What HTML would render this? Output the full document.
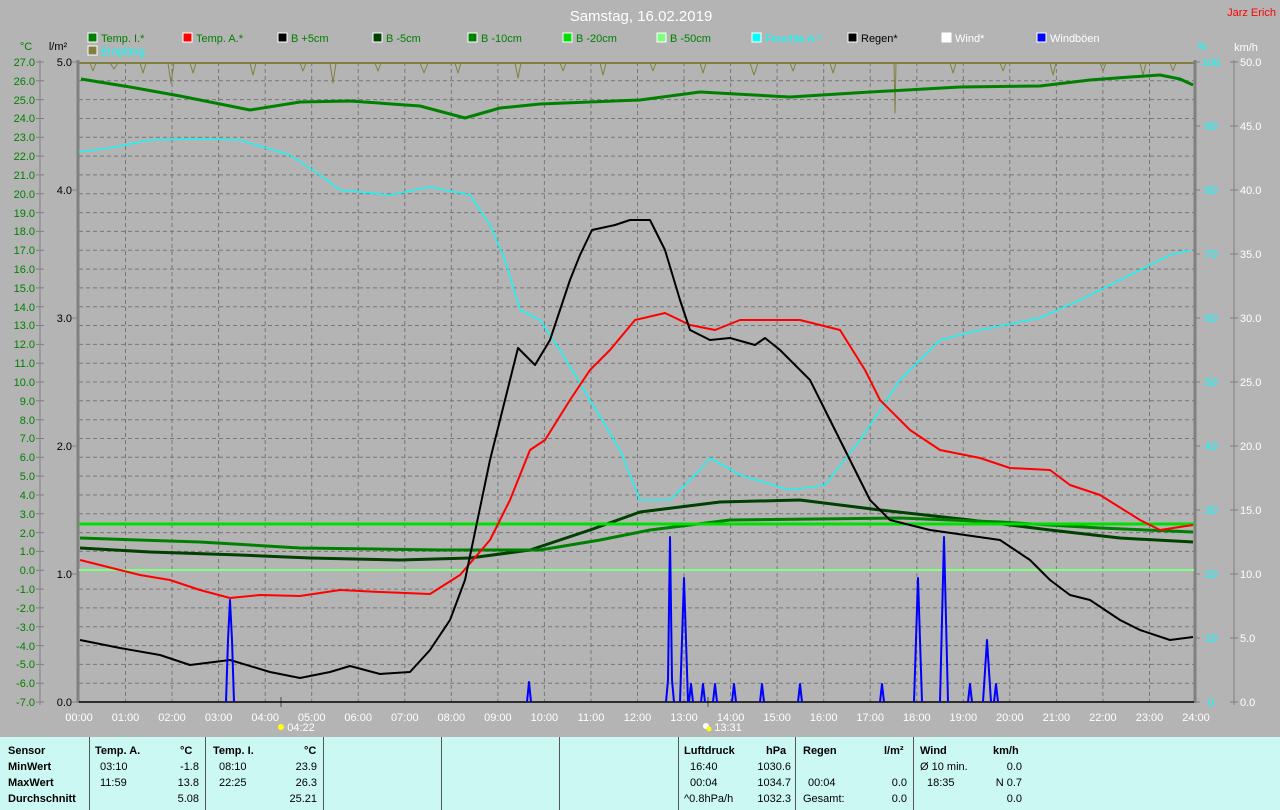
<!DOCTYPE html>
<html><head><meta charset="utf-8"><style>
body{margin:0;width:1280px;height:810px;overflow:hidden;background:#b4b4b4;font-family:"Liberation Sans",sans-serif}
svg{position:absolute;left:0;top:0}
.p{position:absolute;left:0;top:737px;width:1280px;height:73px;background:#ccf8f4;font-size:11px;color:#000}
.v{position:absolute;top:0;width:1px;height:73px;background:#555}
.t{position:absolute;white-space:nowrap}
.b{font-weight:bold}
</style></head><body>
<svg width="1280" height="737" font-family="Liberation Sans, sans-serif">
<text x="641" y="21" fill="#fff" font-size="15" text-anchor="middle">Samstag, 16.02.2019</text>
<text x="1276" y="16" fill="#f00" font-size="11" text-anchor="end">Jarz Erich</text>
<g font-size="11">
<rect x="88" y="33" width="9" height="9" fill="#008000" stroke="#fff"/><text x="101" y="42" fill="#008000">Temp. I.*</text>
<rect x="183" y="33" width="9" height="9" fill="#f00" stroke="#fff"/><text x="196" y="42" fill="#008000">Temp. A.*</text>
<rect x="278" y="33" width="9" height="9" fill="#000" stroke="#fff"/><text x="291" y="42" fill="#008000">B +5cm</text>
<rect x="373" y="33" width="9" height="9" fill="#004000" stroke="#fff"/><text x="386" y="42" fill="#008000">B -5cm</text>
<rect x="468" y="33" width="9" height="9" fill="#008000" stroke="#fff"/><text x="481" y="42" fill="#008000">B -10cm</text>
<rect x="563" y="33" width="9" height="9" fill="#00e000" stroke="#fff"/><text x="576" y="42" fill="#008000">B -20cm</text>
<rect x="657" y="33" width="9" height="9" fill="#80ff80" stroke="#fff"/><text x="670" y="42" fill="#008000">B -50cm</text>
<rect x="752" y="33" width="9" height="9" fill="#0ff" stroke="#fff"/><text x="765" y="42" fill="#0ff">Feuchte A.*</text>
<rect x="848" y="33" width="9" height="9" fill="#000" stroke="#fff"/><text x="861" y="42" fill="#000">Regen*</text>
<rect x="942" y="33" width="9" height="9" fill="#fff" stroke="#fff"/><text x="955" y="42" fill="#fff">Wind*</text>
<rect x="1037" y="33" width="9" height="9" fill="#00f" stroke="#fff"/><text x="1050" y="42" fill="#fff">Windböen</text>
<rect x="88" y="46" width="9" height="9" fill="#808040" stroke="#fff"/><text x="101" y="55" fill="#0ff">Empfang</text>
<text x="26" y="50" fill="#008000" text-anchor="middle">°C</text>
<text x="58" y="50" fill="#000" text-anchor="middle">l/m²</text>
<text x="1202" y="50" fill="#0ff" text-anchor="middle">%</text>
<text x="1246" y="51" fill="#fff" text-anchor="middle">km/h</text>
</g>
<!-- grid -->
<g stroke="#777" stroke-dasharray="4,3" stroke-width="1">
<path id="hg" d="M79 80.8H1194M79 99.6H1194M79 118.5H1194M79 137.3H1194M79 156.1H1194M79 174.9H1194M79 193.8H1194M79 212.6H1194M79 231.4H1194M79 250.2H1194M79 269.1H1194M79 287.9H1194M79 306.7H1194M79 325.5H1194M79 344.4H1194M79 363.2H1194M79 382H1194M79 400.8H1194M79 419.7H1194M79 438.5H1194M79 457.3H1194M79 476.1H1194M79 495H1194M79 513.8H1194M79 532.6H1194M79 551.4H1194M79 570.3H1194M79 589.1H1194M79 607.9H1194M79 626.7H1194M79 645.6H1194M79 664.4H1194M79 683.2H1194"/>
<path d="M125.5 62V702M172 62V702M218.6 62V702M265.2 62V702M311.7 62V702M358.2 62V702M404.8 62V702M451.3 62V702M497.9 62V702M544.4 62V702M591 62V702M637.5 62V702M684 62V702M730.6 62V702M777.1 62V702M823.7 62V702M870.2 62V702M916.8 62V702M963.3 62V702M1009.8 62V702M1056.4 62V702M1102.9 62V702M1149.5 62V702"/>
</g>
<g stroke="#808080" fill="none">
<path d="M78 60V703M1195 60V703" stroke-width="3"/>
<path d="M40 60V705M1234 60V705"/>
<path d="M1194 62h6M1194 126h6M1194 190h6M1194 254h6M1194 318h6M1194 382h6M1194 446h6M1194 510h6M1194 574h6M1194 638h6M1194 702h6"/>
<path d="M1230 62h8M1230 126h8M1230 190h8M1230 254h8M1230 318h8M1230 382h8M1230 446h8M1230 510h8M1230 574h8M1230 638h8M1230 702h8"/>
<path d="M72 62h6M72 190h6M72 318h6M72 446h6M72 574h6M72 702h6"/>
<path d="M281 697v10M708 697v10" stroke-width="2"/>
</g>
<path d="M79 702H1194" stroke="#000" stroke-width="1.5"/>
<path d="M36 62h8M36 80.8h8M36 99.6h8M36 118.5h8M36 137.3h8M36 156.1h8M36 174.9h8M36 193.8h8M36 212.6h8M36 231.4h8M36 250.2h8M36 269.1h8M36 287.9h8M36 306.7h8M36 325.5h8M36 344.4h8M36 363.2h8M36 382h8M36 400.8h8M36 419.7h8M36 438.5h8M36 457.3h8M36 476.1h8M36 495h8M36 513.8h8M36 532.6h8M36 551.4h8M36 570.3h8M36 589.1h8M36 607.9h8M36 626.7h8M36 645.6h8M36 664.4h8M36 683.2h8M36 702h8" stroke="#808080"/>
<g font-size="11" fill="#008000" text-anchor="end">
<text x="35" y="66">27.0</text><text x="35" y="85">26.0</text><text x="35" y="104">25.0</text><text x="35" y="122">24.0</text><text x="35" y="141">23.0</text><text x="35" y="160">22.0</text><text x="35" y="179">21.0</text><text x="35" y="198">20.0</text><text x="35" y="217">19.0</text><text x="35" y="235">18.0</text><text x="35" y="254">17.0</text><text x="35" y="273">16.0</text><text x="35" y="292">15.0</text><text x="35" y="311">14.0</text><text x="35" y="329">13.0</text><text x="35" y="348">12.0</text><text x="35" y="367">11.0</text><text x="35" y="386">10.0</text><text x="35" y="405">9.0</text><text x="35" y="424">8.0</text><text x="35" y="442">7.0</text><text x="35" y="461">6.0</text><text x="35" y="480">5.0</text><text x="35" y="499">4.0</text><text x="35" y="518">3.0</text><text x="35" y="537">2.0</text><text x="35" y="555">1.0</text><text x="35" y="574">0.0</text><text x="35" y="593">-1.0</text><text x="35" y="612">-2.0</text><text x="35" y="631">-3.0</text><text x="35" y="650">-4.0</text><text x="35" y="668">-5.0</text><text x="35" y="687">-6.0</text><text x="35" y="706">-7.0</text>
</g>
<g font-size="11" fill="#000" text-anchor="end">
<text x="72" y="66">5.0</text><text x="72" y="194">4.0</text><text x="72" y="322">3.0</text><text x="72" y="450">2.0</text><text x="72" y="578">1.0</text><text x="72" y="706">0.0</text>
</g>
<g font-size="11" fill="#0ff">
<text x="1202" y="66">100</text><text x="1205" y="130">90</text><text x="1205" y="194">80</text><text x="1205" y="258">70</text><text x="1205" y="322">60</text><text x="1205" y="386">50</text><text x="1205" y="450">40</text><text x="1205" y="514">30</text><text x="1205" y="578">20</text><text x="1205" y="642">10</text><text x="1208" y="706">0</text>
</g>
<g font-size="11" fill="#fff">
<text x="1240" y="66">50.0</text><text x="1240" y="130">45.0</text><text x="1240" y="194">40.0</text><text x="1240" y="258">35.0</text><text x="1240" y="322">30.0</text><text x="1240" y="386">25.0</text><text x="1240" y="450">20.0</text><text x="1240" y="514">15.0</text><text x="1240" y="578">10.0</text><text x="1240" y="642">5.0</text><text x="1240" y="706">0.0</text>
</g>
<g font-size="11" fill="#fff" text-anchor="middle">
<text x="79" y="721">00:00</text><text x="125.5" y="721">01:00</text><text x="172" y="721">02:00</text><text x="218.6" y="721">03:00</text><text x="265.2" y="721">04:00</text><text x="311.7" y="721">05:00</text><text x="358.2" y="721">06:00</text><text x="404.8" y="721">07:00</text><text x="451.3" y="721">08:00</text><text x="497.9" y="721">09:00</text><text x="544.4" y="721">10:00</text><text x="591" y="721">11:00</text><text x="637.5" y="721">12:00</text><text x="684" y="721">13:00</text><text x="730.6" y="721">14:00</text><text x="777.1" y="721">15:00</text><text x="823.7" y="721">16:00</text><text x="870.2" y="721">17:00</text><text x="916.8" y="721">18:00</text><text x="963.3" y="721">19:00</text><text x="1009.8" y="721">20:00</text><text x="1056.4" y="721">21:00</text><text x="1102.9" y="721">22:00</text><text x="1149.5" y="721">23:00</text><text x="1196" y="721">24:00</text>
<text x="301" y="731">04:22</text><text x="728" y="731">13:31</text>
</g>
<circle cx="281" cy="727" r="3" fill="#ff0"/><circle cx="706" cy="726" r="3" fill="#fff"/><circle cx="709" cy="729" r="2.5" fill="#ff0"/>
<!-- data -->
<g fill="none" stroke-linejoin="round">
<path d="M79 63H1194" stroke="#808040" stroke-width="2"/>
<path d="M90 63l3 8 3-8M110 63l4 6 4-6M140 63l3 10 3-10M168 63l3 20 3-20M190 63l3 10 3-10M250 63l3 12 3-12M300 63l3 8 3-8M330 63l3 20 3-20M375 63l3 8 3-8M420 63l4 10 4-10M455 63l3 10 3-10M515 63l3 15 3-15M560 63l3 8 3-8M600 63l3 12 3-12M650 63l3 8 3-8M700 63l3 10 3-10M750 63l4 12 4-12M790 63l3 8 3-8M830 63l3 10 3-10M894 63l1 50 1-50M950 63l3 10 3-10M1000 63l3 8 3-8M1050 63l3 12 3-12M1100 63l3 8 3-8M1140 63l3 12 3-12M1170 63l3 8 3-8" stroke="#808040" stroke-width="1"/>
<path d="M81 79L130 87L180 96L250 110L300 102L350 101L420 106L465 118L500 108L540 104L640 100L700 92L790 97L870 92L960 87L1040 86L1090 80L1130 77L1160 75L1180 79L1193 85" stroke="#008000" stroke-width="3"/>
<path d="M79 152L110 148L150 140L200 139L240 140L290 155L320 175L340 190L390 195L430 187L470 195L490 225L505 260L520 310L540 320L560 350L590 400L620 450L640 500L670 500L700 470L710 458L740 475L790 490L825 485L860 440L900 380L940 340L980 330L1040 318L1080 300L1120 280L1170 255L1190 250" stroke="#0ff" stroke-width="1.3"/>
<path d="M80 548L150 552L240 555L310 558L400 560L470 558L530 550L590 530L640 512L720 502L800 500L880 510L970 520L1050 530L1120 538L1193 542" stroke="#004000" stroke-width="3"/>
<path d="M80 538L200 542L300 548L440 550L540 550L600 540L650 530L730 520L900 518L1000 522L1100 528L1193 532" stroke="#008000" stroke-width="3"/>
<path d="M79 524H1194" stroke="#00e000" stroke-width="3"/>
<path d="M79 570H1194" stroke="#80ff80" stroke-width="2"/>
<path d="M80 560L120 570L140 575L170 580L200 590L230 598L260 595L300 596L340 590L380 592L430 594L460 575L490 540L510 500L530 450L545 440L570 400L590 370L610 350L635 320L665 313L690 325L715 330L740 320L800 320L840 330L865 370L880 400L910 430L940 450L980 458L1010 468L1050 470L1070 485L1100 495L1140 520L1160 530L1193 525" stroke="#f00" stroke-width="2"/>
<path d="M80 640L120 648L160 655L190 665L230 660L270 672L300 678L330 672L350 666L380 674L410 672L430 650L450 620L465 580L490 460L505 400L518 348L535 365L550 340L570 280L580 255L592 230L615 225L630 220L650 220L665 250L680 300L690 330L710 340L730 338L755 345L765 338L780 350L810 380L830 420L850 460L870 500L890 520L930 530L1000 540L1030 560L1050 580L1070 595L1090 600L1120 620L1140 630L1170 640L1193 637" stroke="#000" stroke-width="2"/>
<path d="M226 702L228 640L230 600L232 640L234 702M527 702L529 682L531 702M666 702L668 680L670 537L672 680L674 702M680 702L684 578L688 702M689 702L691 684L693 702M701 702L703 684L705 702M713 702L715 684L717 702M732 702L734 684L736 702M760 702L762 684L764 702M798 702L800 684L802 702M880 702L882 684L884 702M914 702L918 578L922 702M940 702L944 537L948 702M968 702L970 684L972 702M983 702L987 640L991 702M994 702L996 684L998 702" stroke="#00f" stroke-width="2"/>
</g>
</svg>
<div class="p">
<div class="v" style="left:89px"></div><div class="v" style="left:205px"></div><div class="v" style="left:323px"></div><div class="v" style="left:441px"></div><div class="v" style="left:559px"></div><div class="v" style="left:678px"></div><div class="v" style="left:795px"></div><div class="v" style="left:913px"></div>
<div class="t b" style="left:8px;top:8px">Sensor</div><div class="t b" style="left:8px;top:24px">MinWert</div><div class="t b" style="left:8px;top:40px">MaxWert</div><div class="t b" style="left:8px;top:56px">Durchschnitt</div>
<div class="t b" style="left:95px;top:8px">Temp. A.</div><div class="t b" style="left:180px;top:8px">°C</div>
<div class="t" style="left:100px;top:24px">03:10</div><div class="t" style="left:100px;top:40px">11:59</div>
<div class="t" style="right:1081px;top:24px">-1.8</div><div class="t" style="right:1081px;top:40px">13.8</div><div class="t" style="right:1081px;top:56px">5.08</div>
<div class="t b" style="left:213px;top:8px">Temp. I.</div><div class="t b" style="left:304px;top:8px">°C</div>
<div class="t" style="left:219px;top:24px">08:10</div><div class="t" style="left:219px;top:40px">22:25</div>
<div class="t" style="right:963px;top:24px">23.9</div><div class="t" style="right:963px;top:40px">26.3</div><div class="t" style="right:963px;top:56px">25.21</div>
<div class="t b" style="left:684px;top:8px">Luftdruck</div><div class="t b" style="left:766px;top:8px">hPa</div>
<div class="t" style="left:690px;top:24px">16:40</div><div class="t" style="left:690px;top:40px">00:04</div><div class="t" style="left:684px;top:56px">^0.8hPa/h</div>
<div class="t" style="right:489px;top:24px">1030.6</div><div class="t" style="right:489px;top:40px">1034.7</div><div class="t" style="right:489px;top:56px">1032.3</div>
<div class="t b" style="left:803px;top:8px">Regen</div><div class="t b" style="left:884px;top:8px">l/m²</div>
<div class="t" style="left:808px;top:40px">00:04</div><div class="t" style="left:803px;top:56px">Gesamt:</div>
<div class="t" style="right:373px;top:40px">0.0</div><div class="t" style="right:373px;top:56px">0.0</div>
<div class="t b" style="left:920px;top:8px">Wind</div><div class="t b" style="left:993px;top:8px">km/h</div>
<div class="t" style="left:920px;top:24px">Ø 10 min.</div><div class="t" style="left:927px;top:40px">18:35</div>
<div class="t" style="right:258px;top:24px">0.0</div><div class="t" style="right:258px;top:40px">N 0.7</div><div class="t" style="right:258px;top:56px">0.0</div>
</div>
</body></html>
